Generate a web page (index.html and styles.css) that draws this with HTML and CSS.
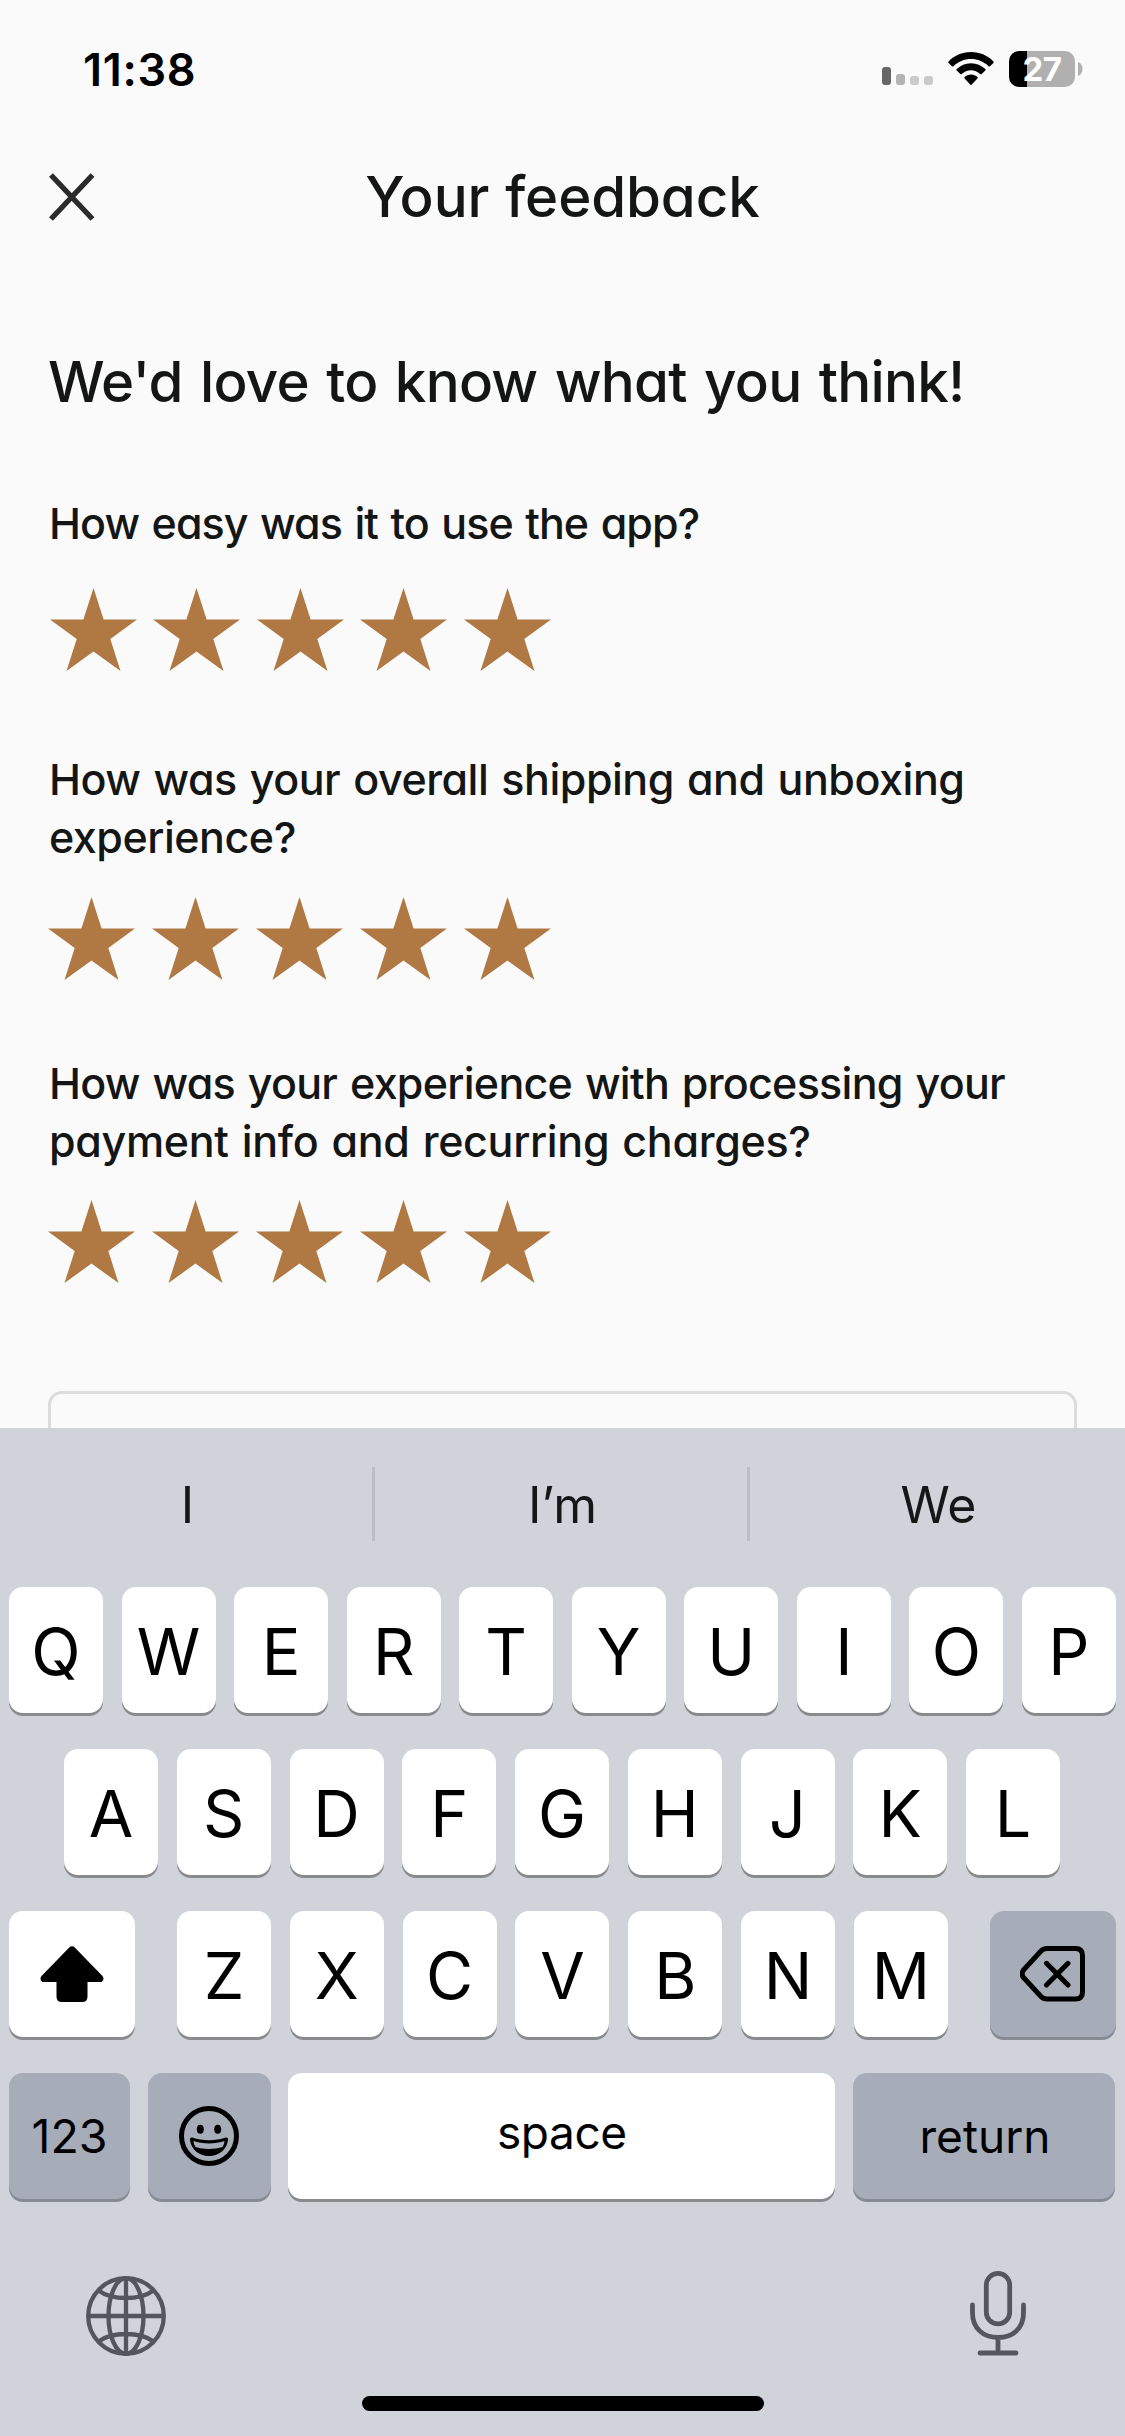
FILE: index.html
```html
<!DOCTYPE html>
<html lang="en">
<head>
<meta charset="utf-8">
<title>Your feedback</title>
<link rel="stylesheet" href="styles.css">
</head>
<body>
<svg class="defs" width="0" height="0" aria-hidden="true">
  <symbol id="star" viewBox="0 0 87 83"><path d="M43.5 0 53.6 31.5H87L60.3 51 70.5 83 43.5 63.6 16.5 83 26.7 51 0 31.5H33.4Z"/></symbol>
</svg>
<div class="screen">
  <div class="status">
    <span class="time">11:38</span>
    <div class="indicators">
      <div class="signal"><i class="bar bar-on"></i><i class="bar bar-mid"></i><i class="bar"></i><i class="bar"></i></div>
      <svg class="wifi" width="46" height="34" viewBox="0 0 46 34">
        <path d="M23 0C32 0 40 3.6 45.4 9.4c.5.5.5 1 0 1.500L42 14.200c-.5.5-1 .5-1.500 0C36 9.700 29.800 7 23 7S10 9.700 5.500 14.200c-.5.5-1 .5-1.500 0L.6 10.900c-.5-.5-.5-1 0-1.500C6 3.600 14 0 23 0Z"/>
        <path d="M23 11.300c5.600 0 10.600 2.200 14.300 5.800.5.5.5 1 0 1.500L33.700 22c-.5.5-1 .4-1.500 0C29.700 19.700 26.500 18.300 23 18.300s-6.700 1.400-9.200 3.700c-.5.4-1 .5-1.500 0L8.700 18.600c-.5-.5-.5-1 0-1.500C12.400 13.500 17.400 11.300 23 11.300Z"/>
        <path d="M23 22.600c2.500 0 4.700.9 6.400 2.400.5.5.5 1 0 1.500L23.800 32.500c-.5.6-1.100.6-1.600 0L16.600 26.500c-.5-.5-.5-1 0-1.500C18.300 23.500 20.500 22.600 23 22.600Z"/>
      </svg>
      <div class="battery"><span class="level">27</span></div>
      <svg class="nub" width="5" height="14" viewBox="0 0 5 14"><path d="M0 0C3 1 4.500 4 4.500 7S3 13 0 14Z"/></svg>
    </div>
  </div>
  <header class="header">
    <svg class="close" width="48" height="48" viewBox="0 0 48 48"><path d="M3 2 44.500 46M44.500 2 3 46"/></svg>
    <h1 class="title">Your feedback</h1>
  </header>
  <main class="form">
    <h2 class="heading">We'd love to know what you think!</h2>
    <section class="question question-app">
      <p class="prompt">How easy was it to use the app?</p>
      <div class="stars"><svg><use href="#star"/></svg><svg><use href="#star"/></svg><svg><use href="#star"/></svg><svg><use href="#star"/></svg><svg><use href="#star"/></svg></div>
    </section>
    <section class="question question-shipping">
      <p class="prompt">How was your overall shipping and unboxing<br>experience?</p>
      <div class="stars"><svg><use href="#star"/></svg><svg><use href="#star"/></svg><svg><use href="#star"/></svg><svg><use href="#star"/></svg><svg><use href="#star"/></svg></div>
    </section>
    <section class="question question-payment">
      <p class="prompt">How was your experience with processing your<br><span class="prompt-end">payment info and recurring charges?</span></p>
      <div class="stars"><svg><use href="#star"/></svg><svg><use href="#star"/></svg><svg><use href="#star"/></svg><svg><use href="#star"/></svg><svg><use href="#star"/></svg></div>
    </section>
    <div class="comment"></div>
  </main>
  <div class="keyboard">
    <div class="suggestions"><span class="word">I</span><span class="word">I’m</span><span class="word">We</span></div>
    <div class="row"><b class="key">Q</b><b class="key">W</b><b class="key">E</b><b class="key">R</b><b class="key">T</b><b class="key">Y</b><b class="key">U</b><b class="key">I</b><b class="key">O</b><b class="key">P</b></div>
    <div class="row row-inset"><b class="key">A</b><b class="key">S</b><b class="key">D</b><b class="key">F</b><b class="key">G</b><b class="key">H</b><b class="key">J</b><b class="key">K</b><b class="key">L</b></div>
    <div class="row">
      <b class="key key-wide"><svg width="64" height="56" viewBox="0 0 64 56"><path d="M29.500 1.200Q32-.8 34.500 1.200L62.500 30Q65 33.500 61.500 36H47.500V50.500Q47.500 56 42 56H22Q16.500 56 16.500 50.500V36H2.500Q-1 33.500 1.500 30Z"/></svg></b>
      <div class="letters"><b class="key">Z</b><b class="key">X</b><b class="key">C</b><b class="key">V</b><b class="key">B</b><b class="key">N</b><b class="key">M</b></div>
      <b class="key key-wide key-dark"><svg width="66" height="56" viewBox="0 0 66 56" fill="none" stroke="#000" stroke-width="5" stroke-linecap="round" stroke-linejoin="round"><path d="M27 2.500H55.500Q62.500 2.500 62.500 9.500V46Q62.500 53 55.500 53H27Q23.500 53 21 50.500L3.500 31.500Q.8 27.800 3.500 24L21 5Q23.500 2.500 27 2.500ZM26.500 17.300 48 39M48 17.300 26.500 39"/></svg></b>
    </div>
    <div class="row row-bottom">
      <b class="key key-dark key-num">123</b>
      <b class="key key-dark key-emoji"><svg width="60" height="60" viewBox="0 0 60 60"><circle cx="30" cy="30" r="27.500" fill="none" stroke="#000" stroke-width="5"/><ellipse cx="21.300" cy="23.300" rx="3.500" ry="4.500"/><ellipse cx="38.700" cy="23.300" rx="3.500" ry="4.500"/><path d="M13.500 31.500C23 35.200 37 35.200 46.500 31.500Q49.500 31 49 34C48 43 40.500 50 30 50S12 43 11 34Q10.500 31 13.500 31.500Z"/><path d="M14.500 35C23 38.200 37 38.200 45.500 35Q45.500 38 43.500 41C36 43.500 24 43.500 16.500 41Q14.500 38 14.500 35Z" fill="#a7adb8"/></svg></b>
      <b class="key key-space">space</b>
      <b class="key key-dark key-return">return</b>
    </div>
    <div class="tools">
      <svg width="80" height="80" viewBox="0 0 80 80" fill="none" stroke="#53565c" stroke-width="4.300"><circle cx="40" cy="40" r="37.800"/><ellipse cx="40" cy="40" rx="17.500" ry="37.800"/><path d="M40 2V78M2 40H78M12.500 14.500C26 24.500 54 24.500 67.500 14.500M12.500 65.500C26 55.500 54 55.500 67.500 65.500"/></svg>
      <svg width="56" height="85" viewBox="0 0 56 85" fill="none" stroke="#53565c" stroke-width="4.800" stroke-linecap="round"><rect x="16.300" y="2.400" width="23.400" height="50.500" rx="11.700"/><path d="M2.500 34V42C2.500 57 13 66.500 28 66.500S53.500 57 53.500 42V34M28 67V81M10 82H46"/></svg>
    </div>
    <div class="home"></div>
  </div>
</div>
</body>
</html>
```
FILE: styles.css
```css
* { box-sizing: border-box; margin: 0; padding: 0; }
body { background: #fafafa; font-family: Inter, "Liberation Sans", sans-serif; }
.defs { position: absolute; }
.screen { width: 1125px; height: 2436px; overflow: hidden; display: flex; flex-direction: column; }

.status { height: 138px; padding: 0 42px 0 83px; display: flex; align-items: center; justify-content: space-between; }
.time { font-size: 45px; font-weight: 600; letter-spacing: 0.7px; color: #000; }
.indicators { display: flex; align-items: center; }
.signal { display: flex; align-items: flex-end; gap: 4px; height: 32px; margin-right: 15px; }
.bar { width: 9px; height: 9px; border-radius: 3px; background: #cacaca; }
.bar-mid { height: 11px; background: #b3b3b3; }
.bar-on { height: 18px; background: #666; }
.signal { gap: 5px; }
.wifi { margin-right: 15px; }
.battery { width: 66px; height: 36px; border-radius: 10px; background: linear-gradient(90deg, #000 18px, #b0b0b0 18px); display: flex; align-items: center; justify-content: center; }
.level { font-size: 33px; font-weight: 700; letter-spacing: -0.5px; color: #fff; }
.nub { margin-left: 3px; fill: #b0b0b0; }

.header { height: 117px; display: grid; grid-template-columns: 48px 1fr 48px; align-items: center; padding: 0 48px; }
.close { fill: none; stroke: #2b2b2b; stroke-width: 5.4; }
.title, .heading, .prompt { color: #141515; font-weight: 500; font-feature-settings: "cv11"; white-space: nowrap; }
.title { font-size: 56.5px; letter-spacing: -0.1px; word-spacing: 1px; text-align: center; }

.form { height: 1173px; padding: 87px 48px 0; overflow: hidden; }
.heading { font-size: 56.5px; line-height: 80px; letter-spacing: -0.75px; word-spacing: 3px; margin-bottom: 72px; }
.prompt { padding-left: 1px; font-size: 43px; line-height: 58px; word-spacing: 2px; }
.stars { display: flex; gap: 17px; height: 83px; }
.stars svg { width: 87px; height: 83px; fill: #b07842; }
.question-app { margin-bottom: 79px; }
.question-app .prompt { letter-spacing: -0.95px; margin-bottom: 36px; }
.question-app .stars { gap: 16.5px; padding-left: 1.5px; }
.question-shipping { margin-bottom: 74px; }
.question-shipping .prompt { letter-spacing: -0.47px; margin-bottom: 31px; }
.question-payment { margin-bottom: 108px; }
.question-payment .prompt { letter-spacing: -0.72px; margin-bottom: 30px; }
.question-payment .prompt-end { letter-spacing: -0.32px; }
.comment { height: 240px; border: 3px solid #dbdcdb; border-radius: 14px; }

.keyboard { height: 1008px; background: #d0d3da; display: flex; flex-direction: column; }
.suggestions { height: 74px; margin: 39px 0 46px; display: grid; grid-template-columns: repeat(3, 1fr); }
.word { display: flex; align-items: center; justify-content: center; padding: 1px 0 0 3px; font-size: 50px; color: #141618; border-right: 3px solid #bbbec5; }
.word:last-child { padding-left: 2px; border-right: 0; }
.row { height: 126px; margin-bottom: 36px; padding: 0 9px; display: flex; justify-content: space-between; }
.row-inset { padding: 0 65px 0 64px; }
.row-bottom { padding-right: 10px; }
.letters { width: 771px; display: flex; justify-content: space-between; }
.key { width: 94px; height: 126px; padding-top: 3px; border-radius: 14px; background: #fff; box-shadow: 0 3px 0 #898a8d; display: flex; align-items: center; justify-content: center; font-size: 64.5px; font-weight: 400; color: #000; }
.key-wide { width: 126px; padding-top: 0; }
.key-dark { background: #a7adb8; box-shadow: 0 3px 0 #858a93; }
.key-num { width: 121px; padding-top: 0; font-size: 46.5px; }
.key-emoji { width: 123px; padding-top: 0; }
.key-space { width: 547px; padding: 0 0 8px; font-size: 46px; letter-spacing: -0.4px; }
.key-return { width: 262px; padding: 0 0 0 2px; font-size: 46px; }
.tools { height: 86px; margin-top: 35px; padding: 0 99px 0 86px; display: flex; justify-content: space-between; align-items: flex-end; }
.home { width: 402px; height: 15px; border-radius: 8px; background: #000; margin: 40px auto 0; }
```
